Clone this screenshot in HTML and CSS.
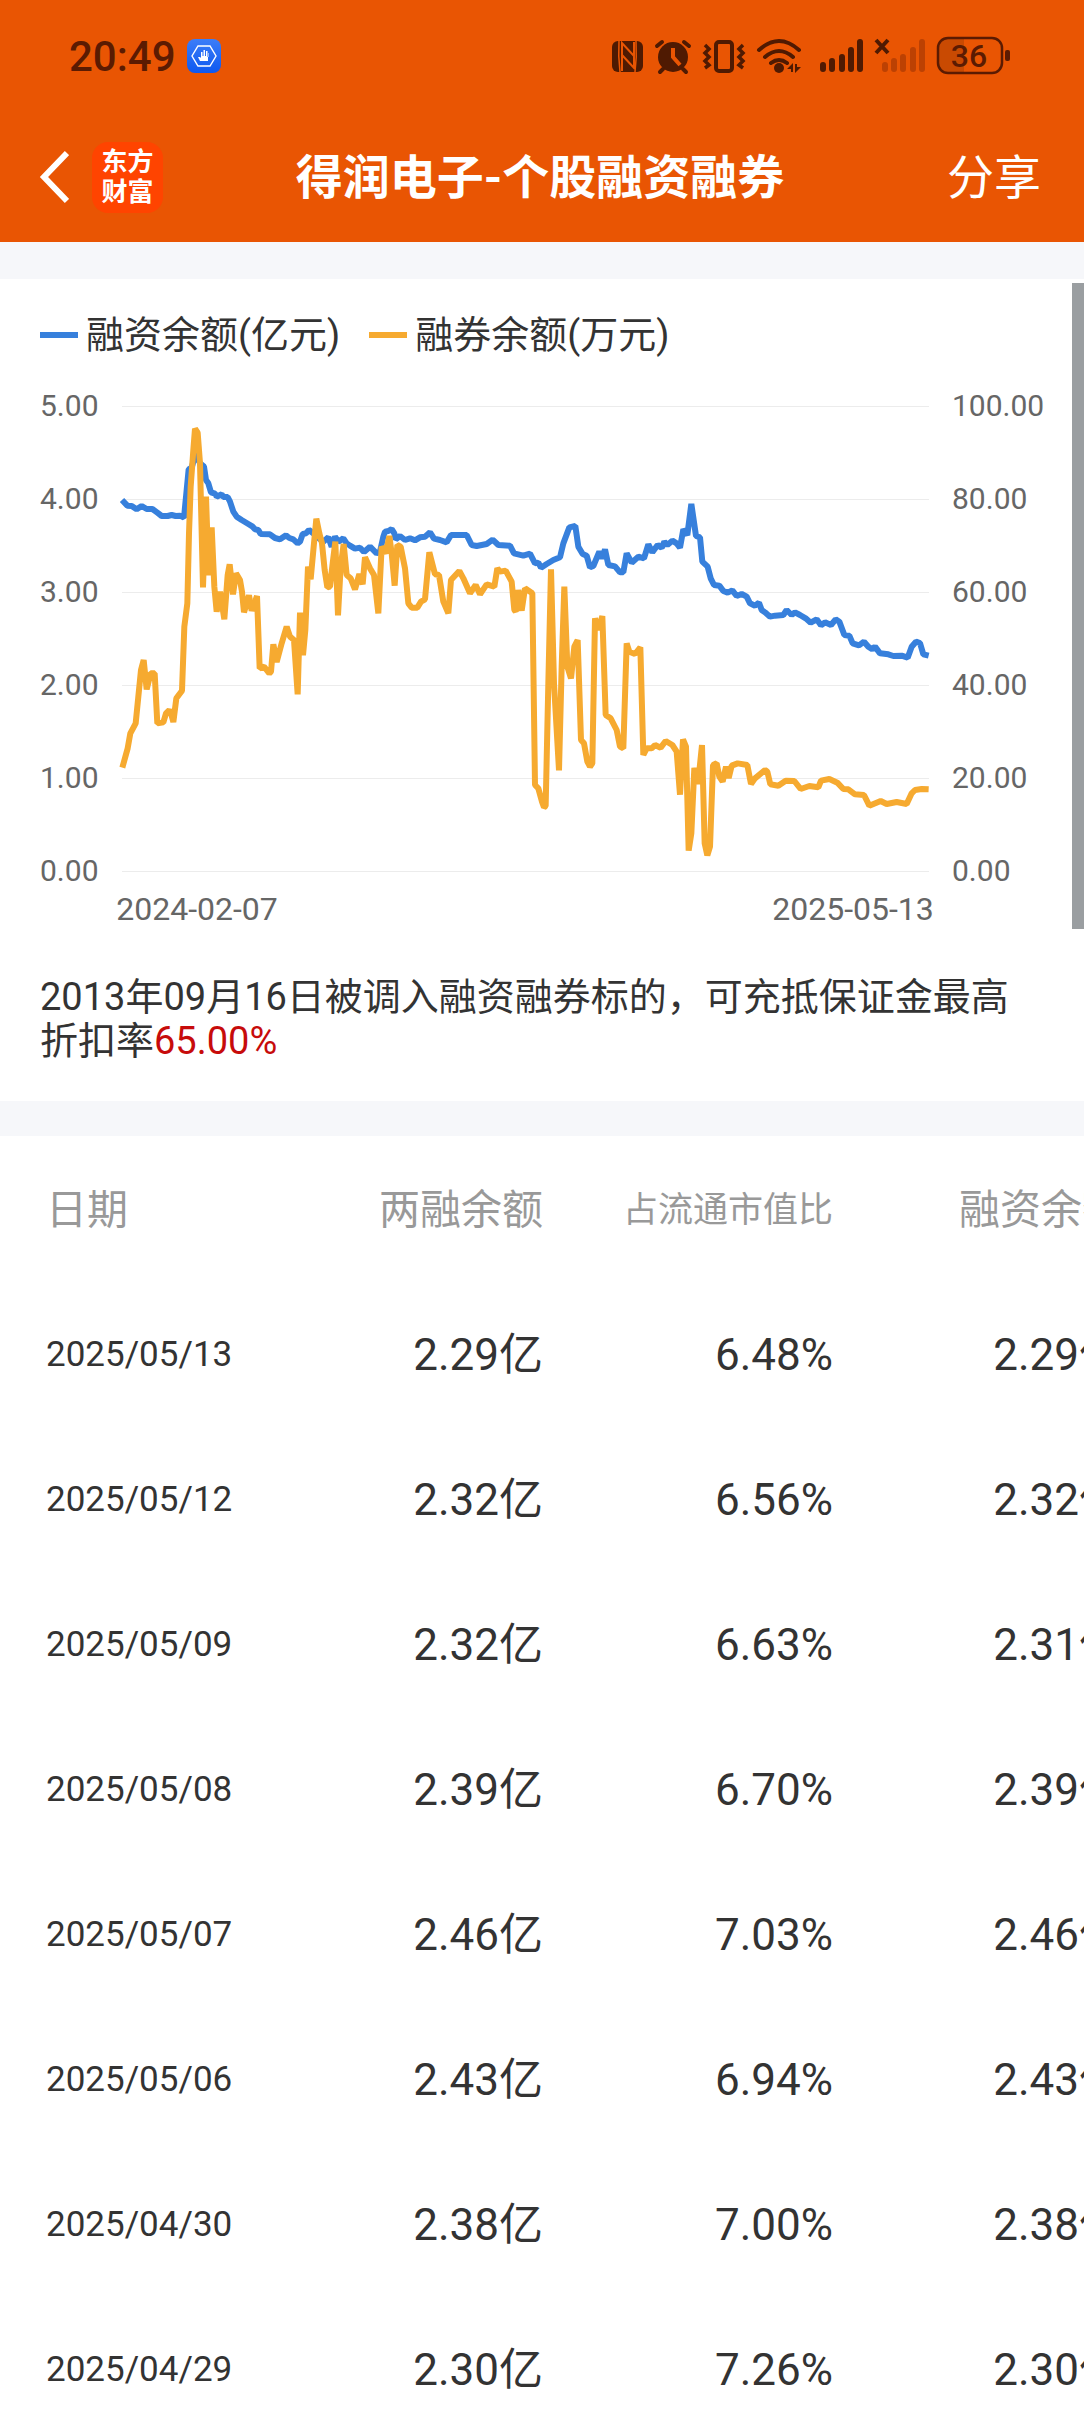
FILE: index.html
```html
<!DOCTYPE html>
<html lang="zh-CN">
<head>
<meta charset="utf-8">
<meta name="viewport" content="width=device-width">
<title>得润电子-个股融资融券</title>
<link rel="stylesheet" href="styles.css">
</head>
<body>
<div class="app">
  <header class="header">
    <div class="status">
      <span class="status-time">20:49</span>
      <svg class="status-app" width="34" height="34" viewBox="0 0 34 34" aria-hidden="true">
        <defs><linearGradient id="badge" x2="0" y2="1"><stop stop-color="#3c7df8"/><stop offset="1" stop-color="#0d58f0"/></linearGradient></defs>
        <rect width="34" height="34" rx="8" fill="url(#badge)"/>
        <path d="M11 7h12l6 10-6 10H11L5 17z" fill="none" stroke="#fff" stroke-width="1.4"/>
        <path d="M13 22l-2-4 2 0 1 1v-6h1.500v4h1v-6h1.500v6h1v-5h1.500v6h1v-4H21v8h-7z" fill="#fff"/>
      </svg>
      <svg class="status-icons" width="400" height="40" viewBox="611 36 400 40" aria-hidden="true">
        <g fill="#4f1a02">
          <rect x="612" y="41" width="31" height="31" rx="6"/>
          <path d="M619 41q-1 15 1 31M636 41q1 16-1 31" fill="none" stroke="#e95503" stroke-width="1.500"/>
          <path d="M622 71V43l12 13M622 55l13 14M634 42v26" fill="none" stroke="#e95503" stroke-width="2"/>
          <circle cx="673" cy="57" r="15"/>
          <path d="M657 46l5-4M689 46l-5-4M663 69l-3 3M683 69l3 3" stroke="#4f1a02" stroke-width="4" stroke-linecap="round"/>
          <path d="M673 48v9l7 8" fill="none" stroke="#e95503" stroke-width="4"/>
        </g>
        <g fill="none" stroke="#4f1a02" stroke-width="4">
          <rect x="716" y="42" width="16" height="29" rx="3"/>
          <path d="M705 45l4 4-4 4 4 4-4 4 4 4-4 3M743 45l-4 4 4 4-4 4 4 4-4 4 4 3" stroke-width="3.500"/>
          <path d="M759 50q20-18 40 0M765 57q14-12 28 0M771 63q8-6 16 0" stroke-linecap="round"/>
        </g>
        <g fill="#4f1a02">
          <circle cx="779" cy="68" r="5"/>
          <path d="M787 69l6-6v9h-2v-3zM801 67l-6 6v-9h2v3z"/>
        </g>
        <g fill="none" stroke-width="6" stroke-linecap="round">
          <path stroke="#4f1a02" d="M823 65v4M832 61v8M842 57v12M851 50v19M860 42v27"/>
          <path stroke="#bc4103" d="M885 65v4M894 61v8M903 57v12M913 50v19M922 42v27"/>
          <path stroke="#4f1a02" stroke-width="4" stroke-linecap="butt" d="M876 40l12 13M888 40l-12 13"/>
        </g>
        <path d="M964 38v35h-16q-10 0-10-10V48q0-10 10-10z" fill="#c94a02"/>
        <rect x="938" y="38" width="64" height="35" rx="10" fill="none" stroke="#5b1b02" stroke-width="2.500"/>
        <rect x="1005" y="50" width="5" height="11" rx="2" fill="#5b1b02"/>
        <text class="battery" x="969" y="67" text-anchor="middle">36</text>
      </svg>
    </div>
    <nav class="nav">
      <div class="nav-left">
        <button class="back" type="button" aria-label="返回">
          <svg width="30" height="54" viewBox="0 0 30 54" aria-hidden="true"><path d="M28 3L5 27l23 24" fill="none" stroke="#fff" stroke-width="6"/></svg>
        </button>
        <div class="logo">东方<br>财富</div>
      </div>
      <h1 class="title">得润电子-个股融资融券</h1>
      <button class="share" type="button">分享</button>
    </nav>
  </header>

  <main class="content">
    <section class="panel">
      <div class="scrollbar"></div>
      <div class="legend">
        <span class="legend-item"><i class="swatch blue"></i>融资余额(亿元)</span>
        <span class="legend-item"><i class="swatch orange"></i>融券余额(万元)</span>
      </div>
      <svg class="chart" viewBox="0 380 1084 550" role="img" aria-label="融资余额与融券余额走势">
        <path class="grid" d="M122 406.500H929M122 499.500H929M122 592.500H929M122 685.500H929M122 778.500H929M122 871.500H929"/>
        <g class="axis">
          <text x="40" y="416">5.00</text><text x="40" y="509">4.00</text><text x="40" y="602">3.00</text>
          <text x="40" y="695">2.00</text><text x="40" y="788">1.00</text><text x="40" y="881">0.00</text>
          <text x="952" y="416">100.00</text><text x="952" y="509">80.00</text><text x="952" y="602">60.00</text>
          <text x="952" y="695">40.00</text><text x="952" y="788">20.00</text><text x="952" y="881">0.00</text>
        </g>
        <g class="axis dates">
          <text x="197" y="920" text-anchor="middle">2024-02-07</text><text x="853" y="920" text-anchor="middle">2025-05-13</text>
        </g>
        <svg x="0" y="400" width="1084" height="500" viewBox="0 0 3252 1500">
          <polyline class="line" stroke="#3780dc" points="366,300 382,317 395,318 410,328 425,318 440,327 457,327 472,338 485,348 503,348 515,345 527,348 540,347 552,353 566,208 575,203 587,160 600,190 612,200 618,240 625,250 633,277 645,281 650,290 665,283 670,291 683,291 690,305 700,335 710,350 725,360 745,372 758,380 765,388 775,390 782,402 810,403 825,414 840,418 858,406 868,414 880,418 893,430 900,425 908,402 918,400 927,390 940,400 950,410 970,425 985,412 995,440 1005,410 1015,425 1030,415 1040,430 1050,437 1065,446 1080,443 1092,456 1110,440 1130,460 1140,455 1150,410 1155,395 1165,393 1175,387 1183,400 1187,418 1200,408 1215,420 1230,415 1245,421 1260,412 1275,410 1290,397 1302,416 1320,420 1340,427 1353,405 1400,405 1415,435 1430,438 1460,432 1478,419 1495,435 1530,437 1542,460 1570,467 1590,461 1605,490 1615,488 1623,503 1640,492 1660,480 1680,472 1690,430 1708,382 1726,378 1735,440 1748,462 1760,467 1770,502 1780,498 1798,455 1807,475 1815,448 1825,495 1845,499 1860,517 1870,517 1880,460 1895,488 1915,470 1932,475 1945,433 1957,457 1973,435 1985,443 1993,425 2002,435 2017,422 2030,430 2040,443 2050,388 2062,405 2074,312 2088,408 2100,412 2107,485 2123,500 2132,535 2142,555 2158,557 2170,573 2183,578 2197,571 2210,588 2225,582 2240,590 2250,610 2265,617 2277,608 2285,630 2295,637 2310,650 2325,647 2350,645 2360,630 2375,645 2385,637 2400,645 2417,655 2432,668 2450,658 2463,676 2475,667 2493,675 2507,658 2518,665 2533,705 2548,707 2558,730 2577,736 2592,725 2605,740 2617,748 2625,740 2640,760 2665,763 2680,768 2705,767 2723,773 2735,740 2748,725 2760,729 2770,763 2786,767"/>
          <polyline class="line" stroke="#f6aa30" points="367,1103 383,1045 391,1000 407,970 415,890 423,810 431,780 440,868 452,820 464,820 472,970 490,967 498,940 508,930 513,940 520,966 529,895 546,872 553,680 562,610 567,400 572,260 580,150 585,86 593,98 600,190 609,562 618,290 626,526 635,382 643,560 650,635 660,575 673,658 683,525 689,493 699,583 708,520 720,540 726,575 732,637 747,586 755,632 771,588 779,805 792,800 808,820 813,815 820,733 830,786 845,730 860,680 870,710 882,720 893,883 900,638 909,766 916,690 924,500 932,538 941,440 949,356 958,400 966,430 974,510 982,562 990,560 998,490 1006,425 1014,646 1022,500 1031,432 1040,525 1052,535 1065,568 1078,522 1088,553 1095,472 1110,505 1122,525 1135,640 1145,440 1157,460 1168,408 1175,460 1184,557 1192,435 1202,440 1215,505 1225,610 1235,623 1252,623 1263,605 1275,598 1288,457 1305,523 1317,525 1330,605 1345,640 1353,540 1378,513 1390,535 1410,580 1427,555 1440,583 1460,553 1483,560 1492,505 1500,515 1517,512 1535,545 1543,630 1547,635 1555,570 1565,632 1575,565 1597,580 1605,1155 1615,1165 1626,1205 1632,1222 1637,1218 1645,850 1653,508 1662,850 1677,1111 1685,800 1693,560 1702,800 1713,835 1723,740 1733,720 1743,1020 1752,1030 1762,1085 1770,1100 1777,1090 1785,655 1795,690 1807,648 1817,945 1832,955 1850,990 1860,1040 1870,1045 1880,730 1888,755 1905,762 1921,742 1930,1065 1940,1045 1955,1045 1965,1035 1982,1043 1997,1023 2017,1035 2030,1055 2040,1184 2049,1018 2058,1040 2066,1352 2074,1300 2083,1104 2094,1152 2106,1035 2114,1330 2122,1366 2130,1340 2139,1095 2150,1090 2158,1130 2168,1145 2178,1100 2186,1134 2195,1097 2213,1090 2242,1095 2253,1152 2265,1135 2295,1110 2302,1115 2311,1153 2335,1157 2357,1142 2383,1143 2402,1167 2428,1158 2455,1162 2463,1142 2488,1137 2512,1148 2530,1167 2545,1168 2565,1183 2592,1185 2608,1217 2642,1203 2660,1212 2690,1206 2720,1212 2735,1180 2745,1170 2765,1167 2786,1168"/>
        </svg>
      </svg>
      <p class="note">2013年09月16日被调入融资融券标的，可充抵保证金最高折扣率<span class="rate">65.00%</span></p>
    </section>

    <section class="records">
      <table>
        <thead>
          <tr><th class="date">日期</th><th>两融余额</th><th class="small">占流通市值比</th><th>融资余额</th></tr>
        </thead>
        <tbody>
          <tr><td class="date">2025/05/13</td><td>2.29亿</td><td>6.48%</td><td>2.29亿</td></tr>
          <tr><td class="date">2025/05/12</td><td>2.32亿</td><td>6.56%</td><td>2.32亿</td></tr>
          <tr><td class="date">2025/05/09</td><td>2.32亿</td><td>6.63%</td><td>2.31亿</td></tr>
          <tr><td class="date">2025/05/08</td><td>2.39亿</td><td>6.70%</td><td>2.39亿</td></tr>
          <tr><td class="date">2025/05/07</td><td>2.46亿</td><td>7.03%</td><td>2.46亿</td></tr>
          <tr><td class="date">2025/05/06</td><td>2.43亿</td><td>6.94%</td><td>2.43亿</td></tr>
          <tr><td class="date">2025/04/30</td><td>2.38亿</td><td>7.00%</td><td>2.38亿</td></tr>
          <tr><td class="date">2025/04/29</td><td>2.30亿</td><td>7.26%</td><td>2.30亿</td></tr>
        </tbody>
      </table>
    </section>
  </main>
</div>
</body>
</html>
```
FILE: styles.css
```css
* {
  box-sizing: border-box;
}

body {
  margin: 0;
  color: #333;
  background: #fff;
  font-family: Roboto, "Noto Sans CJK SC", sans-serif;
}

button {
  padding: 0;
  border: 0;
  background: none;
  color: inherit;
  font: inherit;
}

.app {
  display: flex;
  flex-direction: column;
  height: 100vh;
  overflow: hidden;
}

.header {
  flex: none;
  background: #e95503;
  color: #fff;
}

.status {
  display: flex;
  align-items: center;
  height: 112px;
  padding: 0 73px 0 69px;
}

.status-time {
  padding-top: 2px;
  color: #5b1b02;
  font-size: 42px;
  font-weight: 500;
  line-height: 52px;
}

.status-app {
  margin-left: 11px;
}

.status-icons {
  margin-left: auto;
}

.battery {
  fill: #5b1b02;
  font-size: 32px;
  font-weight: 500;
}

.nav {
  display: grid;
  grid-template-columns: 1fr auto 1fr;
  align-items: center;
  height: 130px;
  padding: 0 43px 0 39px;
}

.nav-left {
  display: flex;
  align-items: center;
  gap: 23px;
}

.back svg {
  display: block;
}

.logo {
  width: 71px;
  height: 71px;
  padding-top: 5px;
  border-radius: 16px;
  background: #ff4400;
  font-size: 26px;
  font-weight: 700;
  line-height: 30px;
  text-align: center;
}

.title {
  margin: 0;
  padding-top: 2px;
  font-size: 47px;
  font-weight: 700;
  line-height: 60px;
}

.share {
  justify-self: end;
  padding-top: 2px;
  font-size: 47px;
  line-height: 60px;
}

.content {
  flex: 1;
  min-height: 0;
  overflow: hidden;
}

.panel {
  position: relative;
  padding: 31px 0 38px;
  border-top: 37px solid #f6f7fa;
  border-bottom: 35px solid #f6f7fa;
}

.scrollbar {
  position: absolute;
  top: 4px;
  right: 0;
  width: 12px;
  height: 646px;
  background: #9a9ea1;
}

.legend {
  display: flex;
  gap: 29px;
  padding: 0 40px;
  font-size: 38px;
  line-height: 50px;
}

.legend-item {
  display: flex;
  align-items: center;
  gap: 8px;
}

.swatch {
  width: 38px;
  height: 6px;
}

.blue {
  background: #3780dc;
}

.orange {
  background: #f6aa30;
}

.chart {
  display: block;
  width: 100%;
  margin-top: 20px;
}

.grid {
  stroke: #ececec;
  stroke-width: 1;
}

.axis {
  fill: #666;
  font-size: 30px;
}

.dates {
  font-size: 32px;
}

.line {
  fill: none;
  stroke-width: 18;
  stroke-linejoin: bevel;
}

.note {
  margin: 45px 64px 0 40px;
  font-size: 38px;
  line-height: 44px;
}

.rate {
  color: #c70b0b;
}

.records {
  overflow: hidden;
}

table {
  width: 1123px;
  border-collapse: collapse;
  table-layout: fixed;
}

tr {
  height: 145px;
}

th,
td {
  width: 290px;
  padding: 0;
  text-align: right;
  font-weight: 400;
}

th {
  padding-bottom: 5px;
  color: #999;
  font-size: 41px;
}

th.small {
  font-size: 35px;
}

td {
  padding-top: 44px;
  font-size: 44px;
  line-height: 60px;
  vertical-align: baseline;
}

.date {
  width: 253px;
  padding-left: 46px;
  text-align: left;
}

td.date {
  padding-top: 2px;
  font-size: 35px;
  vertical-align: middle;
}
```
